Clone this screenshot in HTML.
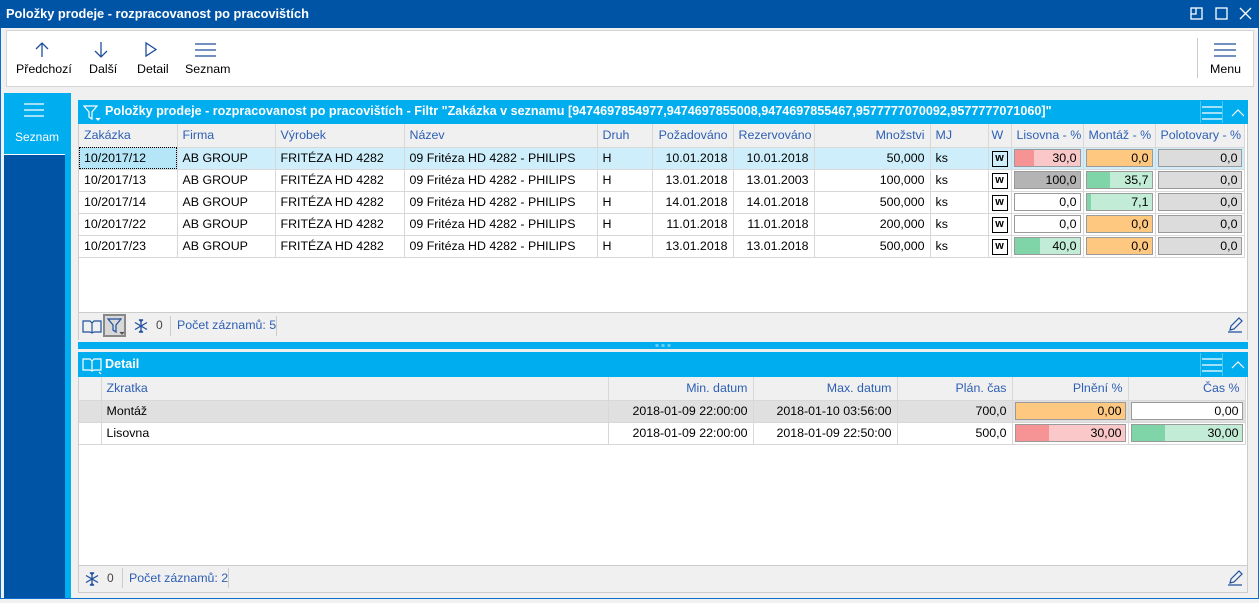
<!DOCTYPE html>
<html><head><meta charset="utf-8"><style>
*{box-sizing:border-box;margin:0;padding:0}
body{width:1259px;height:603px;overflow:hidden;background:#f0f0f0;font-family:"Segoe UI","Liberation Sans",sans-serif;font-size:12px;color:#000;position:relative}
.a{position:absolute}
.frame{left:0;top:0;width:1259px;height:603px;border:1px solid #0a6fd0;border-top:none}
.title{left:0;top:0;width:1259px;height:28px;background:#0054a6;color:#fff;font-weight:bold;font-size:12.8px;padding:6px 0 0 6px}
.tb{left:6px;top:30px;width:1248px;height:57px;background:#fff;border:1px solid #d4d4d4}
.hdr{background:#00adef;color:#fff;font-weight:bold;font-size:12.6px}
table{border-collapse:collapse;table-layout:fixed;position:absolute}
td{border-right:1px solid #d8d8d8;border-bottom:1px solid #d8d8d8;height:22px;padding:0 5px;white-space:nowrap;overflow:hidden;font-size:12.4px}
tr.h td{background:#f0f0f0;color:#2d5fb4;height:23px}
.r{text-align:right}
.bar{position:relative;height:18px;border:1px solid #9a9a9a;text-align:right;padding-right:3px;line-height:16px;margin:0 -3px}
.w{display:inline-block;width:16px;height:16px;border:1.5px solid #000;font-weight:bold;font-size:11px;line-height:12px;text-align:center}
.ft{color:#2d5fb4;font-size:12.4px}
</style></head><body>
<div class="a frame"></div>
<div class="a title">Položky prodeje - rozpracovanost po pracovištích</div>
<svg class="a" style="left:1189px;top:6px" width="64" height="16" fill="none" stroke="#fff" stroke-width="1.3">
<rect x="2" y="2" width="11" height="11"/><path d="M2 8h5V2"/><rect x="27" y="2" width="11" height="11"/><path d="M51 2l11 11M62 2L51 13"/></svg>
<div class="a tb"></div>
<svg class="a" style="left:33px;top:40px" width="200" height="20" fill="none" stroke="#1f4f9c" stroke-width="1.3">
<path d="M9 17V3M3 9l6-6 6 6"/><path d="M68 2v15M62 11l6 6 6-6"/><path d="M113 3v13l10-6.5z"/><path d="M162 4h21M162 10h21M162 16h21"/></svg>
<div class="a" style="left:16px;top:62px;font-size:12.4px">Předchozí</div>
<div class="a" style="left:89px;top:62px;font-size:12.4px">Další</div>
<div class="a" style="left:137px;top:62px;font-size:12.4px">Detail</div>
<div class="a" style="left:185px;top:62px;font-size:12.4px">Seznam</div>
<div class="a" style="left:1197px;top:38px;width:1px;height:40px;background:#ccc"></div>
<svg class="a" style="left:1214px;top:42px" width="22" height="16" stroke="#1f4f9c" stroke-width="1.3"><path d="M0 2h22M0 8h22M0 14h22"/></svg>
<div class="a" style="left:1210px;top:62px;font-size:12.4px">Menu</div>
<!-- sidebar -->
<div class="a" style="left:4px;top:93px;width:67px;height:506px;background:#00adef"></div>
<div class="a" style="left:4px;top:155px;width:61px;height:444px;background:#0054a6"></div>
<div class="a" style="left:4px;top:154px;width:61px;height:1px;background:#fff"></div>
<svg class="a" style="left:24px;top:102px" width="20" height="16" stroke="#fff" stroke-width="1.3"><path d="M0 2h20M0 8h20M0 14h20"/></svg>
<div class="a" style="left:15px;top:130px;color:#fff;font-size:12px">Seznam</div>
<!-- top panel -->
<div class="a" style="left:78px;top:100px;width:1170px;height:240px;background:#fff;border:1px solid #ccc"></div>
<div class="a hdr" style="left:78px;top:100px;width:1170px;height:24px;padding:4px 0 0 27px">Položky prodeje - rozpracovanost po pracovištích - Filtr "Zakázka v seznamu [9474697854977,9474697855008,9474697855467,9577777070092,9577777071060]"</div>
<svg class="a" style="left:83px;top:104px" width="18" height="18" fill="none" stroke="#fff" stroke-width="1.2"><path d="M1 2h13l-5 6v7l-3-2V8z"/><path d="M13 14l2 2 2-2" fill="#fff"/></svg>
<div class="a" style="left:1200px;top:101px;width:1px;height:22px;background:#4dc6f4"></div>
<svg class="a" style="left:1202px;top:105px" width="46" height="16" fill="none" stroke="#fff" stroke-width="1.2"><path d="M0 2h20M0 8h20M0 14h20M30 11l6-6 6 6"/></svg>
<div class="a" style="left:1222px;top:101px;width:1px;height:22px;background:#4dc6f4"></div>
<table style="left:79px;top:124px;width:1165px">
<colgroup><col style="width:98px"><col style="width:98px"><col style="width:129px"><col style="width:193px"><col style="width:55px"><col style="width:81px"><col style="width:81px"><col style="width:116px"><col style="width:58px"><col style="width:23px"><col style="width:72px"><col style="width:72px"><col style="width:89px"></colgroup>
<tr class="h"><td>Zakázka</td><td>Firma</td><td>Výrobek</td><td>Název</td><td>Druh</td><td class="r">Požadováno</td><td>Rezervováno</td><td class="r">Množstvi</td><td>MJ</td><td style="padding:0 3px">W</td><td>Lisovna - %</td><td>Montáž - %</td><td>Polotovary - %</td></tr>
<tr style="background:#cdeefa"><td style="outline:1px dotted #000;outline-offset:-1px;background:#b4e6f8">10/2017/12</td><td>AB GROUP</td><td>FRITÉZA HD 4282</td><td>09 Fritéza HD 4282 - PHILIPS</td><td>H</td><td class="r">10.01.2018</td><td class="r">10.01.2018</td><td class="r">50,000</td><td>ks</td><td style="padding:0 3px"><span class="w">w</span></td><td><div class="bar" style="background:linear-gradient(90deg,#f59395 0 19px,#fac8c8 19px)">30,0</div></td><td><div class="bar" style="background:#fec880">0,0</div></td><td><div class="bar" style="background:#dcdcdc">0,0</div></td></tr>
<tr><td>10/2017/13</td><td>AB GROUP</td><td>FRITÉZA HD 4282</td><td>09 Fritéza HD 4282 - PHILIPS</td><td>H</td><td class="r">13.01.2018</td><td class="r">13.01.2003</td><td class="r">100,000</td><td>ks</td><td style="padding:0 3px"><span class="w">w</span></td><td><div class="bar" style="background:#b4b4b4">100,0</div></td><td><div class="bar" style="background:linear-gradient(90deg,#7fd4a8 0 23px,#c2ecd5 23px)">35,7</div></td><td><div class="bar" style="background:#dcdcdc">0,0</div></td></tr>
<tr><td>10/2017/14</td><td>AB GROUP</td><td>FRITÉZA HD 4282</td><td>09 Fritéza HD 4282 - PHILIPS</td><td>H</td><td class="r">14.01.2018</td><td class="r">14.01.2018</td><td class="r">500,000</td><td>ks</td><td style="padding:0 3px"><span class="w">w</span></td><td><div class="bar" style="background:#fff">0,0</div></td><td><div class="bar" style="background:linear-gradient(90deg,#7fd4a8 0 4px,#c2ecd5 4px)">7,1</div></td><td><div class="bar" style="background:#dcdcdc">0,0</div></td></tr>
<tr><td>10/2017/22</td><td>AB GROUP</td><td>FRITÉZA HD 4282</td><td>09 Fritéza HD 4282 - PHILIPS</td><td>H</td><td class="r">11.01.2018</td><td class="r">11.01.2018</td><td class="r">200,000</td><td>ks</td><td style="padding:0 3px"><span class="w">w</span></td><td><div class="bar" style="background:#fff">0,0</div></td><td><div class="bar" style="background:#fec880">0,0</div></td><td><div class="bar" style="background:#dcdcdc">0,0</div></td></tr>
<tr><td>10/2017/23</td><td>AB GROUP</td><td>FRITÉZA HD 4282</td><td>09 Fritéza HD 4282 - PHILIPS</td><td>H</td><td class="r">13.01.2018</td><td class="r">13.01.2018</td><td class="r">500,000</td><td>ks</td><td style="padding:0 3px"><span class="w">w</span></td><td><div class="bar" style="background:linear-gradient(90deg,#7fd4a8 0 25px,#c2ecd5 25px)">40,0</div></td><td><div class="bar" style="background:#fec880">0,0</div></td><td><div class="bar" style="background:#dcdcdc">0,0</div></td></tr>
</table>
<div class="a" style="left:79px;top:312px;width:1168px;height:28px;background:#f0f0f0;border-top:1px solid #ccc"></div>
<svg class="a" style="left:82px;top:318px" width="20" height="16" fill="none" stroke="#1f4f9c" stroke-width="1.2"><path d="M1 3h7l2 2 2-2h7v11h-7l-2 1-2-1H1zM10 5v10"/></svg>
<div class="a" style="left:103px;top:314px;width:23px;height:23px;border:2px solid #888;background:#d8d8d8"></div>
<svg class="a" style="left:107px;top:318px" width="18" height="18" fill="none" stroke="#1f4f9c" stroke-width="1.2"><path d="M1 1h13l-5 6v7l-3-2V7z"/><path d="M13 14l2 2 2-2" fill="#555" stroke="#555"/></svg>
<svg class="a" style="left:133px;top:318px" width="16" height="16" stroke="#1f4f9c" stroke-width="1.3" fill="none"><path d="M8 1v14M2 4.5l12 7M2 11.5l12-7M6 1.5l2 2 2-2M6 14.5l2-2 2 2"/></svg>
<div class="a" style="left:156px;top:318px;color:#444">0</div>
<div class="a" style="left:170px;top:316px;width:1px;height:20px;background:#ccc"></div>
<div class="a ft" style="left:177px;top:318px">Počet záznamů: 5</div>
<div class="a" style="left:276px;top:316px;width:1px;height:20px;background:#ccc"></div>
<svg class="a" style="left:1227px;top:317px" width="16" height="16" fill="none" stroke="#1f4f9c" stroke-width="1.2"><path d="M3 13l1-4 8-8 3 3-8 8zM1 15h14"/></svg>
<!-- splitter -->
<div class="a" style="left:78px;top:342px;width:1170px;height:7px;background:#00adef"></div>
<div class="a" style="left:654px;top:344px;width:18px;height:3px;background:radial-gradient(circle,#5fcdf6 1.5px,transparent 2px) 0 0/6px 3px"></div>
<!-- bottom panel -->
<div class="a" style="left:78px;top:352px;width:1170px;height:241px;background:#fff;border:1px solid #ccc"></div>
<div class="a hdr" style="left:78px;top:352px;width:1170px;height:25px;padding:5px 0 0 27px">Detail</div>
<svg class="a" style="left:82px;top:357px" width="20" height="18" fill="none" stroke="#fff" stroke-width="1.2"><path d="M1 2h7l2 2 2-2h7v11h-7l-2 1-2-1H1zM10 4v10"/><path d="M17 15l2 2" /></svg>
<div class="a" style="left:1200px;top:353px;width:1px;height:23px;background:#4dc6f4"></div>
<svg class="a" style="left:1202px;top:357px" width="46" height="16" fill="none" stroke="#fff" stroke-width="1.2"><path d="M0 2h20M0 8h20M0 14h20M30 11l6-6 6 6"/></svg>
<div class="a" style="left:1222px;top:353px;width:1px;height:23px;background:#4dc6f4"></div>
<table style="left:79px;top:377px;width:1166px">
<colgroup><col style="width:22px"><col style="width:507px"><col style="width:145px"><col style="width:144px"><col style="width:115px"><col style="width:116px"><col style="width:117px"></colgroup>
<tr class="h"><td></td><td>Zkratka</td><td class="r">Min. datum</td><td class="r">Max. datum</td><td class="r">Plán. čas</td><td class="r">Plnění %</td><td class="r">Čas %</td></tr>
<tr style="background:#e0e0e0"><td></td><td>Montáž</td><td class="r">2018-01-09 22:00:00</td><td class="r">2018-01-10 03:56:00</td><td class="r">700,0</td><td><div class="bar" style="background:#fec880">0,00</div></td><td><div class="bar" style="background:#fff">0,00</div></td></tr>
<tr><td></td><td>Lisovna</td><td class="r">2018-01-09 22:00:00</td><td class="r">2018-01-09 22:50:00</td><td class="r">500,0</td><td><div class="bar" style="background:linear-gradient(90deg,#f59395 0 33px,#fac8c8 33px)">30,00</div></td><td><div class="bar" style="background:linear-gradient(90deg,#7fd4a8 0 33px,#c2ecd5 33px)">30,00</div></td></tr>
</table>
<div class="a" style="left:79px;top:565px;width:1168px;height:27px;background:#f0f0f0;border-top:1px solid #ccc"></div>
<svg class="a" style="left:84px;top:571px" width="16" height="16" stroke="#1f4f9c" stroke-width="1.3" fill="none"><path d="M8 1v14M2 4.5l12 7M2 11.5l12-7M6 1.5l2 2 2-2M6 14.5l2-2 2 2"/></svg>
<div class="a" style="left:107px;top:571px;color:#444">0</div>
<div class="a" style="left:122px;top:568px;width:1px;height:20px;background:#ccc"></div>
<div class="a ft" style="left:129px;top:571px">Počet záznamů: 2</div>
<div class="a" style="left:228px;top:568px;width:1px;height:20px;background:#ccc"></div>
<svg class="a" style="left:1227px;top:570px" width="16" height="16" fill="none" stroke="#1f4f9c" stroke-width="1.2"><path d="M3 13l1-4 8-8 3 3-8 8zM1 15h14"/></svg>
<div class="a" style="left:0;top:598px;width:1259px;height:5px;background:#f0f0f0;border-top:1px solid #0a6fd0"></div>
</body></html>
